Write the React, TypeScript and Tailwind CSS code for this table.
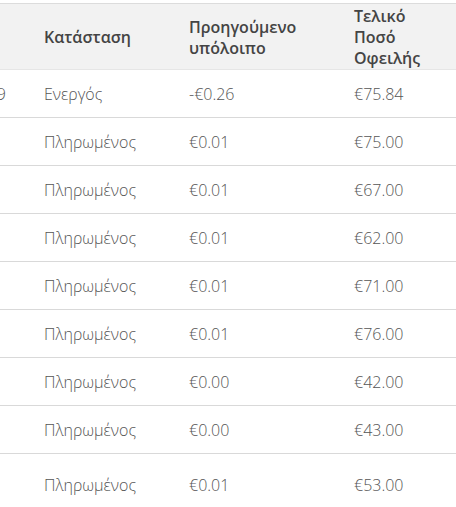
import React from "react";

const rows = [
  { d: "01/11/2019", s: "Ενεργός", p: "-€0.26", t: "€75.84" },
  { d: "", s: "Πληρωμένος", p: "€0.01", t: "€75.00" },
  { d: "", s: "Πληρωμένος", p: "€0.01", t: "€67.00" },
  { d: "", s: "Πληρωμένος", p: "€0.01", t: "€62.00" },
  { d: "", s: "Πληρωμένος", p: "€0.01", t: "€71.00" },
  { d: "", s: "Πληρωμένος", p: "€0.01", t: "€76.00" },
  { d: "", s: "Πληρωμένος", p: "€0.00", t: "€42.00" },
  { d: "", s: "Πληρωμένος", p: "€0.00", t: "€43.00" },
  { d: "", s: "Πληρωμένος", p: "€0.01", t: "€53.00" },
];

export default function App() {
  return (
    <div
      className="w-[456px] h-[507px] overflow-hidden bg-white pt-[3px]"
      style={{ fontFamily: '"Open Sans", "Noto Sans", sans-serif' }}
    >
      <div className="border-t border-[#dcdcdc]">
        <div className="flex items-center bg-[#f2f2f2] h-[66px] pt-[2px] text-[16px] leading-[21px] font-semibold text-[#444444] border-b border-[#e6e6e6]">
          <div className="w-[29px] shrink-0" />
          <div className="w-[145px] shrink-0 pl-[15px]">Κατάσταση</div>
          <div className="w-[165px] shrink-0 pl-[15px]">
            Προηγούμενο
            <br />
            υπόλοιπο
          </div>
          <div className="flex-1 pl-[15px]">
            Τελικό
            <br />
            Ποσό
            <br />
            Οφειλής
          </div>
        </div>
        {rows.map((r, i) => (
          <div
            key={i}
            className={`flex items-center text-[16px] font-light text-[#555555] border-b border-[#d9d9d9] ${
              i === rows.length - 1 ? "h-[62px]" : "h-[48px]"
            }`}
          >
            <div className="w-[29px] shrink-0 overflow-hidden flex justify-end pr-[23px] whitespace-nowrap">
              {r.d}
            </div>
            <div className="w-[145px] shrink-0 pl-[15px]">{r.s}</div>
            <div className="w-[165px] shrink-0 pl-[15px]">{r.p}</div>
            <div className="flex-1 pl-[15px]">{r.t}</div>
          </div>
        ))}
      </div>
    </div>
  );
}
